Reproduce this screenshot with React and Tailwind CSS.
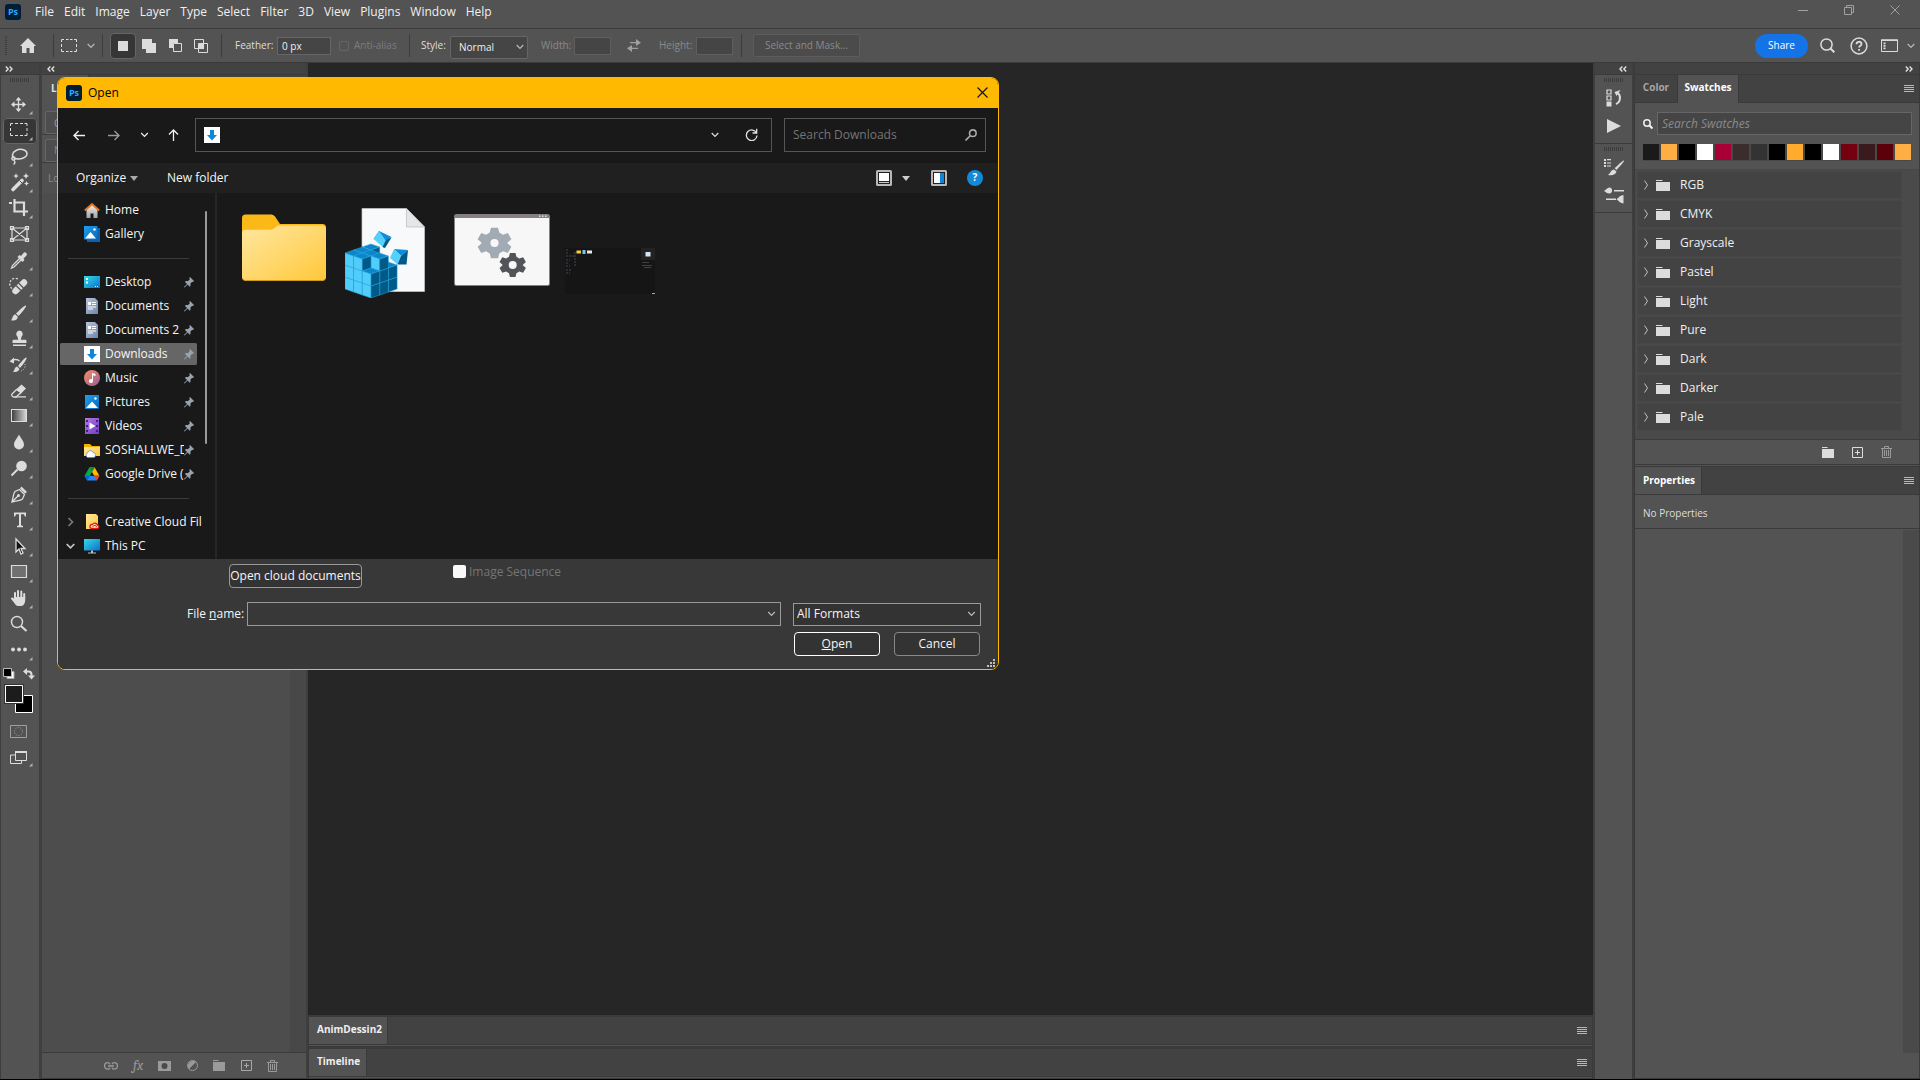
import React from "react";

const L = "#dcdcdc";

function Ps({ className }) {
  return (
    <svg viewBox="0 0 16 16" className={className} aria-label="Photoshop">
      <rect width="16" height="16" rx="3" fill="#001e36" />
      <text x="8" y="11" textAnchor="middle" fontSize="9" fontWeight="700" fill="#31a8ff" fontFamily="Open Sans, sans-serif">Ps</text>
    </svg>
  );
}

function Chevron({ className = "", w = 8, color = "#b8b8b8" }) {
  return (
    <svg width={w} height="6" viewBox="0 0 8 6" className={className} fill="none" stroke={color} strokeWidth="1.2" aria-hidden="true">
      <path d="M.7 1 4 4.5 7.3 1" />
    </svg>
  );
}

function Double({ left }) {
  return (
    <svg width="8" height="6" viewBox="0 0 8 6" fill="none" stroke="#e0e0e0" strokeWidth="1.4" aria-hidden="true">
      {left ? <path d="M3.4.5 1 3l2.400 2.500M7.200.5 4.800 3l2.400 2.500" /> : <path d="M.8.5 3.200 3 .8 5.500M4.600.5 7 3 4.600 5.500" />}
    </svg>
  );
}

function Grip() {
  return (
    <svg width="20" height="4" viewBox="0 0 20 4" className="shrink-0" aria-hidden="true">
      {[0, 2, 4, 6, 8, 10, 12, 14, 16, 18].map((x) => (
        <rect key={x} x={x} width="1" height="4" fill="#3d3d3d" />
      ))}
    </svg>
  );
}

function Burger() {
  return (
    <button aria-label="Panel menu" className="flex items-center">
      <svg width="10" height="8" viewBox="0 0 10 8" fill="#b8b8b8" aria-hidden="true">
        <path d="M0 0h10v1H0zM0 2h10v1H0zM0 4h10v1H0zM0 6h10v1H0z" />
      </svg>
    </button>
  );
}

function FolderGlyph({ w = 14, color = L }) {
  return (
    <svg width={w} height="11" viewBox="0 0 14 11" preserveAspectRatio="none" fill={color} className="shrink-0" aria-hidden="true">
      <path d="M0 0h6l1 1H0zM0 2h14v9H0z" />
    </svg>
  );
}

function PlusGlyph({ color = L }) {
  return (
    <svg width="11" height="11" viewBox="0 0 11 11" fill="none" stroke={color} aria-hidden="true">
      <path d="M.5.5h10v10H.5zM5.500 3v5M3 5.500h5" />
    </svg>
  );
}

function TrashGlyph() {
  return (
    <svg width="11" height="12" viewBox="0 0 11 12" fill="none" stroke="#9a9a9a" aria-hidden="true">
      <path d="M0 2.500h11M3.500 2V.5h4V2M1.500 3v8.500h8V3M3.500 4v6M5.500 4v6M7.500 4v6" />
    </svg>
  );
}

/* ---------- Menu bar and options bar ---------- */

const menus = ["File", "Edit", "Image", "Layer", "Type", "Select", "Filter", "3D", "View", "Plugins", "Window", "Help"];

function MenuBar() {
  return (
    <header className="flex h-7 shrink-0 items-center bg-[#535353] pr-[2px] pl-[5px]">
      <Ps className="mt-[-4px] h-4 w-4" />
      <nav className="ml-[9px] flex grow pb-[4px] text-xs text-[#f0f0f0]">
        {menus.map((m) => (
          <button key={m} className="px-[5px]">{m}</button>
        ))}
      </nav>
      <div className="flex h-full pb-[8px]">
        {[
          ["Minimize", "M0 5.500h10"],
          ["Restore", "M.5 2.500h7v7h-7zM2.500 2.500V.5h7v7h-2"],
          ["Close", "M.5.5l9 9M9.500.5l-9 9"],
        ].map(([n, d]) => (
          <button key={n} aria-label={n} className="flex w-[46px] items-center justify-center">
            <svg width="10" height="10" viewBox="0 0 10 10" fill="none" stroke="#a0a0a0" aria-hidden="true"><path d={d} /></svg>
          </button>
        ))}
      </div>
    </header>
  );
}

function Sep() {
  return <span className="h-[23px] w-px shrink-0 bg-[#3c3c3c]" />;
}

function OptionsBar() {
  return (
    <div className="flex h-[35px] shrink-0 items-center border-y border-[#3a3a3a] bg-[#535353] pr-[5px] pl-[5px] text-[10px] text-[#dedede]">
      <svg width="2" height="20" viewBox="0 0 2 20" aria-hidden="true">
        {[0, 2, 4, 6, 8, 10, 12, 14, 16, 18].map((y) => <rect key={y} y={y} width="2" height="1" fill="#3d3d3d" />)}
      </svg>
      <button aria-label="Home" className="mr-[17px] ml-[13px]">
        <svg width="16" height="15" viewBox="0 0 16 15" fill={L} aria-hidden="true"><path d="M8 0l8 8h-2v7H9.500v-5h-3v5H2V8H0z" /></svg>
      </button>
      <Sep />
      <button aria-label="Marquee preset" className="mx-[7px] flex items-center gap-[10px]">
        <svg width="16" height="13" viewBox="0 0 16 13" fill="none" stroke={L} aria-hidden="true"><path d="M.5 3V.5H3M5 .5h2.500M9 .5h2.500M13 .5h2.500V3M15.500 5v3M15.500 10v2.500H13M11.500 12.500H9M7.500 12.500H5M3 12.500H.5V10M.5 8V5" /></svg>
        <Chevron />
      </button>
      <Sep />
      <div className="flex items-center pr-[13px] pl-[7px]">
        <button aria-label="New selection" className="flex h-[26px] w-[26px] items-center justify-center rounded-sm border border-[#666] bg-[#363636]">
          <span className="h-[10px] w-[10px] bg-[#dcdcdc]" />
        </button>
        <button aria-label="Add to selection" className="ml-[6px]">
          <svg width="14" height="14" viewBox="0 0 14 14" fill={L} aria-hidden="true"><path d="M0 0h10v4h4v10H4v-4H0z" /></svg>
        </button>
        <button aria-label="Subtract from selection" className="ml-[13px]">
          <svg width="13" height="13" viewBox="0 0 13 13" aria-hidden="true"><path d="M0 0h9v4H4v5H0z" fill={L} /><path d="M4.500 4.500h8v8h-8z" fill="none" stroke={L} /></svg>
        </button>
        <button aria-label="Intersect with selection" className="ml-[12px]">
          <svg width="14" height="14" viewBox="0 0 14 14" aria-hidden="true"><path d="M.5.5h9v9h-9zM4.500 4.500h9v9h-9z" fill="none" stroke={L} /><path d="M5 5h5v5H5z" fill={L} /></svg>
        </button>
      </div>
      <Sep />
      <label className="ml-[13px] flex w-[96px] items-center justify-between">
        Feather:
        <input defaultValue="0 px" className="h-[18px] w-[54px] border border-[#666] bg-[#454545] px-1 text-[10px] text-[#f0f0f0]" />
      </label>
      <label className="ml-[8px] flex w-[70px] items-center gap-[5px] text-[#7d7d7d]">
        <input type="checkbox" disabled className="h-[10px] w-[10px] shrink-0 appearance-none rounded-xs border border-[#666]" />
        <span className="whitespace-nowrap">Anti-alias</span>
      </label>
      <Sep />
      <label className="ml-[11px] flex w-[107px] items-center justify-between">
        Style:
        <span className="relative mt-[3px] flex items-center">
          <select className="h-[23px] w-[78px] appearance-none rounded-xs border border-[#666] bg-[#454545] px-2 text-[10px] text-[#f0f0f0]">
            <option>Normal</option>
          </select>
          <Chevron className="absolute right-[4px]" w={8} />
        </span>
      </label>
      <label className="ml-[13px] flex w-[70px] items-center justify-between text-[#8a8a8a]">
        Width:
        <input disabled className="h-[18px] w-[37px] border border-[#5f5f5f] bg-[#454545]" />
      </label>
      <button aria-label="Swap width and height" className="mx-[16px]">
        <svg width="14" height="13" viewBox="0 0 14 13" fill="#a0a0a0" aria-hidden="true"><path d="M3 3h6V0l5 3.700L9 7V4.200H3zM11 10H5v3L0 9.300 5 6v2.800h6z" /></svg>
      </button>
      <label className="ml-[2px] flex w-[74px] items-center justify-between text-[#8a8a8a]">
        Height:
        <input disabled className="h-[18px] w-[37px] border border-[#5f5f5f] bg-[#454545]" />
      </label>
      <span className="ml-[8px] flex"><Sep /></span>
      <button disabled className="ml-[11px] h-[23px] w-[107px] rounded-xs border border-[#5c5c5c] bg-[#4b4b4b] text-[#8a8a8a]">Select and Mask...</button>
      <div className="ml-auto flex items-center">
        <button className="h-[24px] w-[53px] rounded-full bg-[#1473e6] text-[10px] text-white">Share</button>
        <button aria-label="Search" className="ml-[12px]">
          <svg width="15" height="15" viewBox="0 0 15 15" fill="none" stroke={L} strokeWidth="1.500" aria-hidden="true"><circle cx="6.500" cy="6.500" r="5.600" /><path d="M10.500 10.500 14.300 14.300" strokeWidth="2" /></svg>
        </button>
        <button aria-label="Help" className="ml-[15px]">
          <svg width="18" height="18" viewBox="0 0 18 18" fill="none" stroke={L} strokeWidth="1.500" aria-hidden="true"><circle cx="9" cy="9" r="7.900" /><path d="M6.500 7.200c0-3.200 5-3.200 5-.2 0 1.700-2.400 1.800-2.400 3.600M9.100 12v1.700" strokeWidth="1.800" /></svg>
        </button>
        <button aria-label="Workspace" className="ml-[13px] flex items-center gap-[9px]">
          <svg width="17" height="13" viewBox="0 0 17 13" fill="none" stroke={L} aria-hidden="true"><path d="M.5 1h16v11.500H.5z" /><path d="M0 1.200h17" strokeWidth="1.500" /><path d="M2.500 3.500h2v1.700h-2zM2.500 6h2v1.700h-2zM2.500 8.500h2v1.700h-2z" fill={L} stroke="none" /></svg>
          <Chevron />
        </button>
      </div>
    </div>
  );
}

/* ---------- Toolbar ---------- */

const S = { fill: "none", stroke: L };

const tools = [
  ["Move", <><path {...S} strokeWidth="1.300" d="M14.500 6v13M8 12.500h13" /><path fill={L} d="M14.500 5l3 3.500h-6zM14.500 20l3-3.500h-6zM7 12.500l3.500-3v6zM22 12.500l-3.500-3v6z" /></>],
  ["Rectangular Marquee", <path {...S} d="M6.500 8V5.500H9M11 5.500h3M16 5.500h3M20.500 5.500h2.500V8M23 10v3M23 15v2.500h-2.500M19 17.500h-3M14 17.500h-3M9 17.500H6.500V15M6.500 13v-3" />],
  ["Lasso", <path {...S} strokeWidth="1.500" d="M11 14.500c-4-2-3-6 1-8 5-2.500 11-.5 11 3 0 4-6 6.500-11.500 5M11 14a1.600 1.600 0 1 0-2 2c1.500.5 2.500-1 2-2M10 16.500c1.500 1 1 3-.5 4" />],
  ["Magic Wand", <><path {...S} strokeWidth="3.600" strokeLinecap="round" d="M9 19.500l9-9" /><path stroke="#535353" d="M15.500 10.500l3 3" /><path fill={L} d="M12 3l.8 2.200L15 6l-2.200.8L12 9l-.8-2.200L9 6l2.200-.8zM22 3l.9 2.100L25 6l-2.100.9L22 9l-.9-2.100L19 6l2.100-.9zM22.500 11l.8 1.700 1.700.8-1.700.8-.8 1.700-.8-1.700-1.700-.8 1.700-.8z" /></>],
  ["Crop", <path {...S} strokeWidth="2.200" d="M5 7h3M10.500 3v12.500H24M10.500 6.500H20V20" />],
  ["Frame", <path {...S} strokeWidth="1.200" d="M8 6h15v12H8zM8 6l15 12M23 6L8 18M6.500 4.500h3v3h-3zM21.500 4.500h3v3h-3zM6.500 16.500h3v3h-3zM21.500 16.500h3v3h-3z" />],
  ["Eyedropper", <><path {...S} strokeWidth="1.300" d="M16.500 9.500l-8 8L7.500 20l2.500-1 8-8" /><path fill={L} d="M13.500 9l2-2 1.500 1 2.500-3c2-2 4.500 1 2.800 2.800L19.500 10.500l1 1.500-2 2z" /></>],
  ["Spot Healing", <><path {...S} strokeWidth="6.400" strokeLinecap="round" d="M11.500 17l8.500-8.500" /><path stroke="#535353" strokeWidth="1.200" d="M12 11.500l5.500 5.500M14.500 9l5.500 5.500" /><path {...S} strokeWidth="1.300" strokeDasharray="2 1.500" d="M8 14.500a5.500 5.500 0 1 1 7-9" /></>],
  ["Brush", <><path fill={L} d="M22 5.500c1 1-5 8-7.500 10.500L12 13.500C15 10.500 21 4.500 22 5.500z" /><path fill={L} d="M11.200 14.200l2.600 2.600c0 3-3 4.200-6.800 3.400 2-1.500 1-5 4.200-6z" /></>],
  ["Clone Stamp", <path fill={L} d="M15.500 4.500a3.500 3.500 0 0 1 2 6.200l-.7 3h4.200c1 0 1.500.5 1.500 1.300V17h-14v-2c0-.8.500-1.300 1.500-1.300h4.200l-.7-3a3.500 3.500 0 0 1 2-6.200zM9 18.500h13v1.500H9z" />],
  ["History Brush", <><path fill={L} d="M22.500 5.500c1 1-4 8-6.500 10.500L14 14C16 11 21.500 4.500 22.500 5.500zM13 14.500l2.300 2.300c0 2.500-2.800 3.700-6.300 3 2-1.500 1.200-4.500 4-5.300z" /><path {...S} strokeWidth="1.300" d="M7.500 9c2-2 6-2 8 0" /><path fill={L} d="M5.500 9.500l4.500-4v6z" /><path {...S} strokeDasharray="1 1.500" d="M21 12a6 6 0 0 1-4 7" /></>],
  ["Eraser", <><path {...S} strokeWidth="1.300" d="M12.500 11.500l-4.500 4.500c-.8 1 0 2.500 1.500 3h2.500l5-4.500z" /><path fill={L} d="M12 11.500l5.500-5 4.500 4-5 5zM11 18.300h11v1.200H11z" /></>],
  ["Gradient", <><defs><linearGradient id="tg"><stop stopColor="#3c3c3c" /><stop offset="1" stopColor="#d8d8d8" /></linearGradient></defs><rect x="7.500" y="5.500" width="15" height="12" fill="url(#tg)" stroke={L} /></>],
  ["Blur", <path fill={L} d="M15 4.500c1.500 3.500 5 6.500 5 10a5 5 0 0 1-10 0c0-3.500 3.500-6.500 5-10z" />],
  ["Dodge", <><circle cx="17.500" cy="10" r="5.300" fill={L} /><path {...S} strokeWidth="2" d="M13.500 13.500L7.500 19.500" /></>],
  ["Pen", <><path {...S} strokeWidth="1.300" d="M8 20c1-4 1.500-9 3-10.500l4.500-2 5 5-2 4.500C17 18.500 12 19 8 20zM8 20l6-6" /><circle cx="14.500" cy="13.500" r="1.500" fill={L} /><path fill={L} d="M16 6.500l1.500-2 5.500 5.500-2 1.500z" /></>],
  ["Horizontal Type", <path fill={L} d="M10 4.500h12v4h-1.200l-.8-2.200h-3v11l2 .7v1.300h-6V18l2-.7v-11h-3L11.200 8.500H10z" />],
  ["Path Selection", <path fill="#111" stroke={L} strokeWidth="1.300" d="M12 5v13l3-3 2 5 2-1-2-4.500h4z" />],
  ["Rectangle", <path fill="#707070" stroke={L} strokeWidth="1.200" d="M7.500 5.500h15v12h-15z" />],
  ["Hand", <><path {...S} strokeWidth="2" strokeLinecap="round" d="M11 12V7M14 11V5M17.300 11V5.500M20.200 12V8M8 12.500l3 3.500" /><path fill={L} d="M10 11h11.200v3c0 3-1.700 6-4 6h-3c-2 0-3-1.500-4-3.500L9 14z" /></>],
  ["Zoom", <><circle cx="13" cy="10" r="5.500" {...S} strokeWidth="1.400" /><path {...S} strokeWidth="2.200" d="M17 14l5.500 5" /></>],
  ["Edit Toolbar", <g fill={L}><circle cx="9" cy="11.500" r="1.900" /><circle cx="15" cy="11.500" r="1.900" /><circle cx="21" cy="11.500" r="1.900" /></g>],
];

const Corner = () => <path fill="#b0b0b0" d="M28.500 19v3.500H25z" />;

function Toolbar() {
  return (
    <aside className="flex w-[42px] shrink-0 flex-col border-r-3 border-l border-[#3f3f3f] bg-[#535353]">
      <button aria-label="Expand toolbar" className="flex h-[12px] items-center border-b border-[#3a3a3a] bg-[#424242] pl-[4px]"><Double /></button>
      <div className="flex h-[17px] items-start pt-[3px] pl-[9px]"><Grip /></div>
      {tools.map(([name, art], i) => (
        <button key={name} aria-label={name} className={i === 1 ? "mx-[2px] h-[26px] rounded-sm bg-[#363636] pl-px outline outline-[#666] -outline-offset-1" : "mx-[2px] h-[26px] pl-px"}>
          <svg width="32" height="26" viewBox="0 0 32 26" className="block" aria-hidden="true">
            {art}
            {name !== "Frame" && name !== "Zoom" && <Corner />}
          </svg>
        </button>
      ))}
      <svg width="38" height="55" viewBox="0 0 38 55" className="shrink-0" role="img" aria-label="Foreground and background colors">
        <path d="M6 7.500h7v7H6z" fill="#fff" stroke="#aaa" />
        <path d="M2.500 4.500h8v8h-8z" fill="#000" stroke="#bbb" />
        <path d="M24.500 7.500h3c2 0 3 1 3 3v2" fill="none" stroke={L} strokeWidth="2" />
        <path d="M22 7.500l4-3.500v7zM27 11.500h7l-3.500 4z" fill={L} />
        <path d="M14.500 31.500h17v17h-17z" fill="#000" stroke="#fff" />
        <path d="M3.500 20.500h19v19h-19z" fill="#535353" stroke="#333" />
        <path d="M4.500 21.500h17v17h-17z" fill="#1c1c1c" stroke="#fff" />
      </svg>
      <button aria-label="Quick Mask" className="h-[26px] pl-[9px]">
        <svg width="17" height="14" viewBox="0 0 17 14" fill="none" stroke="#a0a0a0" aria-hidden="true"><path d="M.5.5h16v12H.5z" /><circle cx="8.500" cy="6.500" r="4" strokeDasharray="1 1.500" /></svg>
      </button>
      <button aria-label="Screen mode" className="h-[26px] pl-[9px]">
        <svg width="24" height="17" viewBox="0 0 24 17" fill="none" stroke={L} aria-hidden="true"><path d="M.5 5h11v8.500H.5z" /><path fill="#535353" d="M5.500 2h11v8.500h-11z" /><path d="M5 2h12" strokeWidth="2" /><path d="M22.500 13v3.500H19z" fill="#b0b0b0" stroke="none" /></svg>
      </button>
    </aside>
  );
}

function LayersPanel() {
  return (
    <section className="flex w-[266px] shrink-0 flex-col border-r-2 border-[#3e3e3e] bg-[#4d4d4d] text-[10px] text-[#e0e0e0]">
      <button aria-label="Collapse panel" className="flex h-[12px] shrink-0 items-center border-b border-[#3a3a3a] bg-[#424242] pl-[5px]"><Double left /></button>
      <div className="flex h-[28px] shrink-0 bg-[#424242]">
        <h2 aria-label="Layers" className="flex w-[47px] items-center border-r border-[#3a3a3a] bg-[#535353] pb-[2px] pl-[9px] font-bold">L</h2>
      </div>
      <div className="flex h-[32px] shrink-0 items-end border-b border-[#3e3e3e] bg-[#535353] px-[3px]">
        <input aria-label="Filter layers" placeholder="Q" className="h-[23px] w-24 rounded-xs border border-[#666] bg-[#4d4d4d] px-2 placeholder:text-[#999]" />
      </div>
      <div className="flex h-[28px] shrink-0 items-end border-b border-[#3e3e3e] bg-[#535353] px-[3px]">
        <select disabled aria-label="Blend mode" className="h-[23px] w-24 appearance-none rounded-xs border border-[#666] bg-[#4d4d4d] px-2 text-[#888]"><option>N</option></select>
      </div>
      <div className="flex h-[30px] shrink-0 items-center bg-[#505050] pl-[6px] text-[#8a8a8a]">Lo</div>
      <div className="flex grow justify-end"><div className="w-[16px] bg-[#484848]" /></div>
      <footer className="flex h-[27px] shrink-0 items-center border-y border-[#3a3a3a] bg-[#535353] pl-[62px]">
        <button aria-label="Link layers" className="w-[29px]">
          <svg width="14" height="8" viewBox="0 0 14 8" fill="none" stroke="#9a9a9a" strokeWidth="1.300" aria-hidden="true"><path d="M6 2.300C5.500 1 4.700.7 3.800.7a3.200 3.200 0 0 0 0 6.500C4.700 7.200 5.500 7 6 5.700M8 2.300C8.500 1 9.300.7 10.200.7a3.200 3.200 0 0 1 0 6.500C9.300 7.200 8.500 7 8 5.700M4 4h6" /></svg>
        </button>
        <button aria-label="Layer style" className="w-[25px] text-left font-serif text-sm text-[#9a9a9a] italic">fx</button>
        <button aria-label="Layer mask" className="w-[29px]">
          <svg width="13" height="10" viewBox="0 0 13 10" aria-hidden="true"><path d="M0 0h13v10H0z" fill="#9a9a9a" /><circle cx="6.500" cy="5" r="3" fill="#4a4a4a" /></svg>
        </button>
        <button aria-label="Adjustment layer" className="w-[26px]">
          <svg width="12" height="12" viewBox="0 0 12 12" aria-hidden="true"><circle cx="5.500" cy="5.500" r="5" fill="none" stroke="#9a9a9a" /><path d="M2 9A5 5 0 0 1 9 2z" fill="#9a9a9a" /></svg>
        </button>
        <button aria-label="New group" className="w-[28px]"><FolderGlyph w={12} color="#9a9a9a" /></button>
        <button aria-label="New layer" className="w-[26px]"><PlusGlyph color="#a8a8a8" /></button>
        <button aria-label="Delete layer"><TrashGlyph /></button>
      </footer>
    </section>
  );
}

/* ---------- Canvas area ---------- */

function BottomPanel({ title, className }) {
  return (
    <section className="flex h-[32px] shrink-0 flex-col border-x border-t-2 border-b border-[#3a3a3a] bg-[#535353]">
      <div className="flex h-[28px] items-center justify-between border-b border-[#3a3a3a] bg-[#424242] pr-[5px] text-[10px] font-bold text-[#eee]">
        <h2 className={className}>{title}</h2>
        <Burger />
      </div>
    </section>
  );
}

function CanvasArea() {
  return (
    <main className="flex min-w-0 grow flex-col bg-[#262626]">
      <div className="grow" />
      <BottomPanel title="AnimDessin2" className="flex h-full w-[79px] items-center border-r border-[#3a3a3a] bg-[#535353] pb-[2px] pl-[8px]" />
      <BottomPanel title="Timeline" className="flex h-full w-[58px] items-center border-r border-[#3a3a3a] bg-[#535353] pb-[2px] pl-[8px]" />
    </main>
  );
}

/* ---------- Right side ---------- */

function IconDock() {
  return (
    <aside className="flex w-[41px] shrink-0 flex-col border-x-2 border-[#3e3e3e] bg-[#535353]">
      <button aria-label="Expand dock" className="flex h-[12px] items-center justify-end border-b border-[#3a3a3a] bg-[#424242] pr-[5px]"><Double left /></button>
      <div className="flex h-[69px] flex-col items-center border-b border-[#3a3a3a] pt-[3px]">
        <Grip />
        <button aria-label="History" className="mt-[7px] block">
          <svg width="16" height="18" viewBox="0 0 16 18" className="block" fill="none" stroke={L} strokeWidth="1.200" aria-hidden="true"><path d="M1 1h4v4H1zM1 7h4v4H1z" /><path d="M.5 12.500h5v5h-5z" fill={L} stroke="none" /><path d="M10 15c5-2 5-9 1.500-11" strokeWidth="2" /><path d="M8.500 3l6-2-4 6z" fill={L} stroke="none" /></svg>
        </button>
        <button aria-label="Actions" className="mt-[12px]">
          <svg width="14" height="14" viewBox="0 0 14 14" className="block" fill={L} aria-hidden="true"><path d="M0 0l14 7-14 7z" /></svg>
        </button>
      </div>
      <div className="flex h-[69px] flex-col items-center border-b border-[#3a3a3a] pt-[3px]">
        <Grip />
        <button aria-label="Brushes" className="mt-[7px]">
          <svg width="20" height="18" viewBox="0 0 20 18" className="block" fill={L} aria-hidden="true"><path d="M0 1h2v2H0zM3 1h4v1.200H3zM0 4h2v2H0zM3 4.500h4v1H3zM0 7h2v2H0zM3 7.500h4v1H3zM20 2.500c.8.8-5 7-7.500 9.500l-1.800-1.800C13 8 19.200 1.700 20 2.500zM10 11.500l2.500 2c-.5 3-4 4.200-8.500 3.500 2.500-1.500 3-5.500 6-5.500z" /></svg>
        </button>
        <button aria-label="Brush settings" className="mt-[11px]">
          <svg width="20" height="17" viewBox="0 0 20 17" className="block" fill={L} aria-hidden="true"><path d="M0 4c2-1 3-3.500 5.500-3.500C9 .5 9 6.500 5.500 6.500 3 6.500 2 5 0 4zM10 3h10v1.600H10zM2 11.500h10V13H2zM12.500 12.300c2-1.500 4-4.300 7-4.300v8.500c-3 0-5-2.700-7-4.200z" /></svg>
        </button>
      </div>
    </aside>
  );
}

const swatches = ["#1a1a1a", "#ffae43", "#000", "#fff", "#a80036", "#3b2d2e", "#333", "#000", "#ffab2e", "#000", "#fff", "#75000f", "#3b1a1d", "#5b0009", "#ffae43"];
const groups = ["RGB", "CMYK", "Grayscale", "Pastel", "Light", "Pure", "Dark", "Darker", "Pale"];

function RightPanels() {
  return (
    <aside className="flex w-[286px] shrink-0 flex-col border-x border-[#3a3a3a] bg-[#535353] text-[10px] text-[#dedede]">
      <button aria-label="Collapse panels" className="flex h-[12px] shrink-0 items-center justify-end border-b border-[#3a3a3a] bg-[#424242] pr-[6px]"><Double /></button>
      <div className="flex h-[28px] shrink-0 items-center border-b border-[#3a3a3a] bg-[#424242] pr-[5px] font-bold">
        <button className="h-full w-[43px] border-r border-[#3a3a3a] pb-[2px] text-[#a5a5a5]">Color</button>
        <button className="h-[28px] w-[61px] border-r border-[#3a3a3a] bg-[#535353] pb-[2px] text-white">Swatches</button>
        <span className="ml-auto"><Burger /></span>
      </div>
      <label className="mt-[9px] flex shrink-0 items-center gap-[4px] pr-[7px] pl-[8px]">
        <svg width="10" height="10" viewBox="0 0 10 10" fill="none" stroke="#f0f0f0" strokeWidth="1.500" aria-label="Search"><circle cx="4" cy="4" r="3.200" /><path d="M6.500 6.500l3 3" strokeWidth="2.200" /></svg>
        <input placeholder="Search Swatches" className="h-[23px] min-w-0 grow border border-[#666] bg-[#454545] px-1 text-xs italic placeholder:text-[#8a8a8a]" />
      </label>
      <div className="mx-[8px] mt-[9px] flex h-[17px] shrink-0 justify-between bg-[#484848]">
        {swatches.map((c, i) => (
          <button key={i} aria-label={"Swatch " + (i + 1)} className="h-[16px] w-[16px]" style={{ background: c }} />
        ))}
      </div>
      <div className="mt-[8px] flex h-[270px] shrink-0 flex-col gap-px border-t border-[#474747] bg-[#4a4a4a] pt-px pr-[17px] pl-[2px] text-xs text-[#f0f0f0]">
        {groups.map((g) => (
          <button key={g} className="flex h-[28px] shrink-0 items-center bg-[#434343] pl-[7px] outline outline-[#474747] -outline-offset-1">
            <svg width="4" height="10" viewBox="0 0 4 10" fill="none" stroke="#c0c0c0" className="mr-[8px]" aria-hidden="true"><path d="M.5.5l3 4.500-3 4.500" /></svg>
            <FolderGlyph />
            <span className="ml-[10px]">{g}</span>
          </button>
        ))}
      </div>
      <div className="flex h-[26px] shrink-0 items-center justify-end gap-[18px] border-y border-[#3a3a3a] pr-[27px]">
        <button aria-label="New group"><FolderGlyph w={12} /></button>
        <button aria-label="New swatch"><PlusGlyph /></button>
        <button aria-label="Delete swatch"><TrashGlyph /></button>
      </div>
      <div className="mt-px flex h-[29px] shrink-0 items-center border-t border-b border-[#3a3a3a] bg-[#424242] pr-[5px]">
        <h2 className="flex h-[27px] w-[67px] items-center border-r border-[#3a3a3a] bg-[#535353] pb-px pl-[8px] font-bold text-white">Properties</h2>
        <span className="ml-auto"><Burger /></span>
      </div>
      <p className="flex h-[34px] shrink-0 items-center border-b border-[#3a3a3a] pt-[4px] pl-[8px]">No Properties</p>
      <div className="mt-px mb-[25px] flex grow justify-end"><div className="w-[16px] bg-[#4a4a4a]" /></div>
      <div className="h-px bg-[#3a3a3a]" />
    </aside>
  );
}

/* ---------- Open dialog ---------- */

const Gradients = () => (
  <defs>
    <linearGradient id="bl" x2="1" y2="1"><stop stopColor="#1fa0ee" /><stop offset="1" stopColor="#0669bd" /></linearGradient>
    <linearGradient id="cy" x2="1" y2="1"><stop stopColor="#35dbe6" /><stop offset="1" stopColor="#0b70cc" /></linearGradient>
    <linearGradient id="ye" x2="1" y2="1"><stop stopColor="#ffe7a0" /><stop offset="1" stopColor="#ffc83a" /></linearGradient>
    <linearGradient id="mu" x2="1" y2="1"><stop stopColor="#f4906a" /><stop offset="1" stopColor="#9c5a92" /></linearGradient>
    <linearGradient id="vi" x2="1" y2="1"><stop stopColor="#b478e8" /><stop offset="1" stopColor="#6f3ec2" /></linearGradient>
    <linearGradient id="do" x2="1" y2="1"><stop stopColor="#b5c5da" /><stop offset="1" stopColor="#7084a8" /></linearGradient>
    <linearGradient id="ho" x2="0" y2="1"><stop stopColor="#f0f0f0" /><stop offset="1" stopColor="#a5a5a5" /></linearGradient>
  </defs>
);

const docIcon = (
  <><path d="M2 0h9l3 3v13H2z" fill="url(#do)" /><path d="M4 4h3v3H4zM8 4h4v1H8zM8 6h4v1H8zM4 8.500h8v1H4zM4 10.500h5v1H4z" fill="#fff" /></>
);

const places = [
  { name: "Home", art: <><path d="M2.500 7L8 2l5.500 5v9h-4v-4.500h-3V16h-4z" fill="url(#ho)" /><path d="M.8 8.500L8 2l7.200 6.500" fill="none" stroke="#e8761c" strokeWidth="2" /></> },
  { name: "Gallery", art: <><path d="M3 2h13v14H3z" fill="#0b62ad" /><path d="M0 0h13.500v13.500H0z" fill="url(#bl)" /><path d="M1 12.500L6.500 6l5.500 6.500z" fill="#fff" /><circle cx="10.500" cy="3.500" r="1.200" fill="#fff" /></> },
  null,
  { name: "Desktop", pin: true, art: <><path d="M0 2h16v12H0z" fill="url(#cy)" /><path d="M2 4h2v2H2zM2 7.500h2v2H2z" fill="#e8fbff" /><path d="M11 12h1v1h-1zM13 12h1v1h-1z" fill="#fff" /></> },
  { name: "Documents", pin: true, art: docIcon },
  { name: "Documents 2", pin: true, art: docIcon },
  { name: "Downloads", pin: true, active: true, art: <DownArt /> },
  { name: "Music", pin: true, art: <><circle cx="8" cy="8" r="8" fill="url(#mu)" /><path d="M8 3l3.500 1v2L9 5.300V11a2 2 0 1 1-1-1.700z" fill="#fff" /></> },
  { name: "Pictures", pin: true, art: <><path d="M1 1h14v14H1z" fill="url(#bl)" /><path d="M2 14l6-6.500 6 6.500z" fill="#fff" /><circle cx="11.500" cy="4.500" r="1.200" fill="#fff" /></> },
  { name: "Videos", pin: true, art: <><path d="M1 0h14v16H1z" fill="url(#vi)" /><path d="M2 2h2v2H2zM2 7h2v2H2zM2 12h2v2H2zM12 2h2v2h-2zM12 7h2v2h-2zM12 12h2v2h-2z" fill="#42207e" /><path d="M5.500 4.500l6 3.500-6 3.500z" fill="#fff" /></> },
  { name: "SOSHALLWE_D", pin: true, art: <><path d="M0 2h6l2 2h8v10H0z" fill="#f5b100" /><path d="M0 5h16v9H0z" fill="url(#ye)" /><path d="M3.500 15.500a2.500 2.500 0 0 1 0-4.500c.8-3 4.700-3 5.500-.5 3 0 3.500 5 .5 5z" fill="#fff" stroke="#3a8fd6" strokeWidth=".7" /></> },
  { name: "Google Drive (", pin: true, art: <><path d="M5.300 1.500L8 6.200 3.300 14.500.6 9.800z" fill="#00ac47" /><path d="M10.700 1.500l4.700 8.300H10L5.300 1.500z" fill="#ffba00" /><path d="M5.300 1.500h5.400L8 6.200z" fill="#188038" /><path d="M.6 9.800h14.800l-2.700 4.700H3.300z" fill="#2684fc" /><path d="M.6 9.800h5.400l-2.700 4.700z" fill="#0066da" /><path d="M10 9.800h5.400l-2.700 4.700z" fill="#ea4335" /><path d="M8 6.200l2 3.600H6z" fill="#191919" /></> },
  null,
  { name: "Creative Cloud Fil", arrow: "right", art: <><path d="M2 0h10l2 2v13H2z" fill="url(#ye)" /><path d="M6 12.500a2 2 0 0 1 2.500-2c1.500-2 4.500-1.500 5 .5 2 .5 2 3.500-.5 3.500H8a2 2 0 0 1-2-2z" fill="#fff0c0" stroke="#e01b0c" strokeWidth="1.300" /><path d="M8.500 12.500l3-1.500 1 2" stroke="#e01b0c" fill="none" /></> },
  { name: "This PC", arrow: "down", art: <><path d="M0 1h16v11.500H0z" fill="url(#cy)" /><path d="M7 12.500h2v2H7zM4 14.500h8v1H4z" fill="#b8c0c8" /></> },
];

function DownArt() {
  return <><path d="M0 0h16v16H0z" fill="#fff" /><path d="M6 3h4v5h3l-5 5.500L3 8h3z" fill="#1086d8" /></>;
}

function Sidebar() {
  return (
    <nav className="flex w-[159px] shrink-0 border-r-2 border-[#262626] bg-[#191919] pt-[5px]">
      <ul className="w-[140px] shrink-0">
        {places.map((p, i) =>
          p ? (
            <li key={p.name}>
              <button className={p.active ? "ml-[2px] flex h-[24px] w-[137px] items-center rounded-xs border-y border-[#191919] bg-[#666] pl-[3px]" : "ml-[2px] flex h-[24px] w-[137px] items-center pl-[3px]"}>
                <span className="flex w-[21px] shrink-0 pl-[3px]">
                  {p.arrow === "right" && <svg width="9" height="10" viewBox="0 0 9 10" fill="none" stroke="#7a7a7a" strokeWidth="1.700" aria-hidden="true"><path d="M2.500 1l4 4-4 4" /></svg>}
                  {p.arrow === "down" && <svg width="9" height="6" viewBox="0 0 9 6" fill="none" stroke="#c8c8c8" strokeWidth="1.700" aria-hidden="true"><path d="M.7 1l3.800 3.800L8.300 1" /></svg>}
                </span>
                <svg width="16" height="16" viewBox="0 0 16 16" className="shrink-0" aria-hidden="true">{p.art}</svg>
                <span className={p.pin ? "ml-[5px] min-w-0 grow overflow-hidden text-left whitespace-nowrap" : "ml-[5px] min-w-0 grow text-left whitespace-nowrap"}>{p.name}</span>
                {p.pin && (
                  <svg width="10" height="11" viewBox="0 0 10 11" className="mr-[3px] shrink-0" fill="#9aa4ae" aria-hidden="true"><path d="M6 0l4 4-1 1-.8-.3L6.300 6.700c.4 1.300.2 2.300-.6 3L3.600 7.500.6 10.500 0 10l3-3L.8 4.800c.8-.8 2-.9 3-.5l2-2L5.300 1z" /></svg>
                )}
              </button>
            </li>
          ) : (
            <li key={i} className="flex h-[24px] items-center pr-[9px] pl-[10px]"><span className="h-px grow bg-[#3a3a3a]" /></li>
          )
        )}
      </ul>
      <div className="mt-[13px] ml-[7px] h-[233px] w-[2px] rounded-full bg-[#9a9a9a]" />
    </nav>
  );
}

/* Stacked cubes, listed back to front; i steps back-left, j steps back-right, k steps up. */
const cubes = [];
for (let depth = 4; depth >= 0; depth--)
  for (let i = 0; i < 3; i++)
    for (let k = 0; k < 3; k++) {
      const j = depth - i;
      const missing = k === 2 && ((i === 0 && j !== 1) || (i === 1 && j === 2));
      if (j >= 0 && j < 3 && !missing) cubes.push([26 + (j - i) * 8.7, 84 - 12 * k - 3 * depth]);
    }

function Cube({ x, y }) {
  return (
    <g stroke="#2fa4dc" strokeWidth=".5">
      <path d={`M${x} ${y}l-8.700-3 8.700-3 8.700 3z`} fill="#0a86cc" />
      <path d={`M${x} ${y}v12l-8.700-3v-12z`} fill="#50cdfb" />
      <path d={`M${x} ${y}v12l8.700-3v-12z`} fill="#005a87" />
    </g>
  );
}

const gear = "M-2.800-12h5.600l.9 3.800 2.900 1.700 3.800-1.300 2.800 4.800-3 2.700v.6l3 2.700-2.800 4.800-3.800-1.300-2.900 1.700-.9 3.800h-5.600l-.9-3.800-2.900-1.700-3.800 1.300-2.800-4.800 3-2.700v-.6l-3-2.700 2.800-4.800 3.800 1.300 2.900-1.700z";

function Files() {
  return (
    <div className="flex grow items-start gap-[13px] pt-[9px] pl-[19px]">
      <button aria-label="Folder">
        <svg width="96" height="96" viewBox="0 0 96 96" className="block" aria-hidden="true">
          <path d="M6 16a3.500 3.500 0 0 1 3.500-3.500h25c2 0 3 .5 4.500 2L44 22h42.500a3.500 3.500 0 0 1 3.500 3.500V50H6z" fill="#fbb917" />
          <path d="M6 31a3.500 3.500 0 0 1 3.500-3.300H34c2 0 3-.4 4.500-1.700l3.300-2.500H86a4 4 0 0 1 4 4V75a3.700 3.700 0 0 1-3.700 3.700H9.700A3.700 3.700 0 0 1 6 75z" fill="url(#ye)" />
          <path d="M6.500 76.500c1 1.500 2 2 3.200 2h76.600c1.500 0 2.500-.8 3.200-2" fill="none" stroke="#d29a1c" />
        </svg>
      </button>
      <button aria-label="Registration entries">
        <svg width="96" height="96" viewBox="0 0 96 96" className="block" aria-hidden="true">
          <path d="M17 6.500h44.500L79.500 25v64.500H17z" fill="#f8f9fb" stroke="#c8c8c8" strokeWidth=".7" />
          <path d="M61.500 6.500V25h18z" fill="#e4e6e8" stroke="#b8bcc0" strokeWidth=".7" />
          {cubes.map(([x, y], n) => <Cube key={n} x={x} y={y} />)}
          <path d="M34 29l12.500 6-5.500 4-12.500-2z" fill="#0d8ddb" />
          <path d="M34 29l7 10-2 7-10.500-9z" fill="#55cffb" />
          <path d="M46.500 35.500L40 46l-2.500-1 3.500-7z" fill="#005a87" />
          <path d="M49 47l14 1-7 6z" fill="#0d8ddb" />
          <path d="M49 47l7 7-3.500 8.500L45 56z" fill="#55cffb" />
          <path d="M63 48l-1.500 14.500h-9L56 54z" fill="#005a87" />
        </svg>
      </button>
      <button aria-label="Batch file">
        <svg width="96" height="96" viewBox="0 0 96 96" className="block" aria-hidden="true">
          <rect y="12" width="96" height="72" rx="2.500" fill="#858080" />
          <path d="M1 16h94v65.500a1.500 1.500 0 0 1-1.500 1.500h-91A1.500 1.500 0 0 1 1 81.500z" fill="#f7f7f7" />
          <path d="M85 13.500h1.500V15H85zM88 13.500h1.500V15H88zM91 13.500h1.500V15H91z" fill="#ddd" />
          <g transform="translate(40.500 41) scale(1.280)"><path d={gear} fill="#a2abb3" /><circle r="3.200" fill="#f7f7f7" /></g>
          <g transform="translate(58.700 63)"><path d={gear} fill="#515459" /><circle r="4" fill="#f7f7f7" /></g>
        </svg>
      </button>
      <button aria-label="Screenshot">
        <svg width="96" height="96" viewBox="0 0 96 96" className="block" aria-hidden="true">
          <path d="M2 46h90v46H2z" fill="#151516" />
          <path d="M78 46h14v12H78z" fill="#222" />
          <path d="M82.500 50h5v4.500h-5z" fill="#cfe8f8" />
          <path d="M13.500 48.500h4.500v3h-4.500z" fill="#fdc84a" />
          <path d="M24 48.500h5v3h-5z" fill="#e8e8e8" />
          <path d="M19.500 48h3v4h-3z" fill="#79c5ee" />
          <path d="M3 48h3M3 51h2M3 54h9M3 58h4M3 61h3M3 64h4M3 68h5M3 71h4M12 50v14" stroke="#444850" strokeDasharray="2 1" />
          <path d="M79 60.500h7M79 63.500h10M81 65.500h7" stroke="#4c4c4c" strokeWidth=".8" />
          <path d="M89 91.500h3" stroke="#aaa" />
        </svg>
      </button>
    </div>
  );
}

function OpenDialog() {
  return (
    <div role="dialog" aria-label="Open" className="absolute top-[77px] left-[57px] flex w-[942px] flex-col overflow-hidden rounded-lg border border-[#ffb900] bg-[#191919] text-xs text-[#f5f5f5]">
      <div className="flex h-[30px] shrink-0 items-center bg-[#ffb900] pr-[10px] pb-px pl-[8px] text-black">
        <Ps className="h-4 w-4" />
        <h1 className="ml-[6px] grow">Open</h1>
        <button aria-label="Close">
          <svg width="11" height="11" viewBox="0 0 11 11" className="block" stroke="#111" strokeWidth="1.100" aria-hidden="true"><path d="M.5.5l10 10M10.500.5l-10 10" /></svg>
        </button>
      </div>
      <div className="flex h-[55px] shrink-0 items-center pr-[12px] pb-px pl-[15px]">
        <button aria-label="Back" className="w-[35px]">
          <svg width="12" height="11" viewBox="0 0 12 11" fill="none" stroke="#f0f0f0" strokeWidth="1.400" aria-hidden="true"><path d="M12 5.500H1M5.500 1L1 5.500 5.500 10" /></svg>
        </button>
        <button aria-label="Forward" className="w-[32px]">
          <svg width="12" height="11" viewBox="0 0 12 11" fill="none" stroke="#999" strokeWidth="1.400" aria-hidden="true"><path d="M0 5.500h11M6.500 1L11 5.500 6.500 10" /></svg>
        </button>
        <button aria-label="Recent locations" className="w-[28px]"><Chevron w={9} color="#f0f0f0" /></button>
        <button aria-label="Up" className="w-[27px]">
          <svg width="11" height="12" viewBox="0 0 11 12" fill="none" stroke="#f0f0f0" strokeWidth="1.300" aria-hidden="true"><path d="M5.500 12V1M1 5.500L5.500 1 10 5.500" /></svg>
        </button>
        <div className="flex h-[34px] grow items-center border border-[#555] pr-[13px] pb-px pl-[8px]">
          <svg width="16" height="16" viewBox="0 0 16 16" aria-label="Downloads"><DownArt /></svg>
          <button aria-label="Previous locations" className="mr-[26px] ml-auto"><Chevron w={8} color="#e0e0e0" /></button>
          <button aria-label="Refresh">
            <svg width="13" height="13" viewBox="0 0 13 13" fill="none" stroke="#e0e0e0" strokeWidth="1.300" aria-hidden="true"><path d="M11.500 5A5.300 5.300 0 1 0 12 7.500M11.700.8V5H7.500" /></svg>
          </button>
        </div>
        <label className="ml-[12px] flex h-[34px] w-[202px] items-center border border-[#555] px-[8px]">
          <input aria-label="Search Downloads" placeholder="Search Downloads" className="min-w-0 grow bg-transparent placeholder:text-[#757575]" />
          <svg width="12" height="12" viewBox="0 0 12 12" fill="none" stroke="#aaa" strokeWidth="1.600" aria-hidden="true"><circle cx="7.800" cy="4.200" r="3.300" /><path d="M5.300 6.700L.5 11.500" /></svg>
        </label>
      </div>
      <div className="flex h-[30px] shrink-0 items-center bg-[#202020] pr-[15px] pl-[18px]">
        <button className="flex w-[91px] items-center gap-[4px]">Organize<svg width="8" height="5" viewBox="0 0 8 5" aria-hidden="true"><path d="M0 0h8L4 5z" fill="#aaa" /></svg></button>
        <button>New folder</button>
        <div className="ml-auto flex items-center">
          <button aria-label="Change view" className="flex items-center gap-[10px]">
            <svg width="16" height="16" viewBox="0 0 16 16" aria-hidden="true"><rect width="16" height="16" rx="1.500" fill="#b8b8b8" /><path d="M2 2h12v12H2z" fill="#222" /><path d="M3 3h10v8H3z" fill="#fff" /><path d="M3 12h10v1H3z" fill="#ccc" /></svg>
            <svg width="8" height="5" viewBox="0 0 8 5" aria-hidden="true"><path d="M0 0h8L4 5z" fill="#ccc" /></svg>
          </button>
          <button aria-label="Preview pane" className="ml-[21px]">
            <svg width="16" height="16" viewBox="0 0 16 16" className="block" aria-hidden="true"><rect width="16" height="16" rx="1.500" fill="#b8b8b8" /><path d="M2 2h12v12H2z" fill="#222" /><path d="M3 3h6v10H3z" fill="#fff" /><path d="M9 3h4v10H9z" fill="#1086d8" /></svg>
          </button>
          <button aria-label="Help" className="ml-[20px] flex h-4 w-4 items-center justify-center rounded-full bg-[#1489d8] text-[10px] font-bold text-white">?</button>
        </div>
      </div>
      <div className="flex h-[366px] shrink-0 overflow-hidden">
        <Sidebar />
        <Files />
      </div>
      <div className="flex h-[110px] shrink-0 flex-col bg-[#383838] pt-[5px]">
        <div className="flex items-start pl-[171px]">
          <button className="h-[24px] w-[133px] rounded-sm border border-[#999] bg-[#333] whitespace-nowrap">Open cloud documents</button>
          <label className="ml-[91px] flex h-[15px] items-center gap-[3px] text-[#757575]">
            <input type="checkbox" disabled className="h-[13px] w-[13px] appearance-none rounded-xs bg-[#f8f8f8]" />
            Image Sequence
          </label>
        </div>
        <div className="mt-[14px] flex items-center pr-[17px] pl-[129px]">
          <label htmlFor="fname" className="w-[60px] whitespace-nowrap">File <u>n</u>ame:</label>
          <span className="relative flex grow items-center">
            <input id="fname" className="h-[24px] w-full border border-[#999] bg-[#383838] px-1" />
            <Chevron className="absolute right-[5px]" w={9} />
          </span>
          <span className="relative ml-[12px] flex items-center">
            <select aria-label="Formats" className="h-[23px] w-[188px] appearance-none border border-[#999] bg-[#333] px-[3px]"><option>All Formats</option></select>
            <Chevron className="absolute right-[5px]" w={9} />
          </span>
        </div>
        <div className="mt-[6px] flex justify-end gap-[14px] pr-[18px]">
          <button className="h-[24px] w-[86px] rounded-sm border border-white bg-[#333]"><u>O</u>pen</button>
          <button className="h-[24px] w-[86px] rounded-sm border border-[#888] bg-[#333]">Cancel</button>
        </div>
        <svg width="8" height="8" viewBox="0 0 8 8" className="mt-[3px] mr-[3px] ml-auto" fill="#c0c0c0" aria-hidden="true"><path d="M6 0h2v2H6zM3 3h2v2H3zM6 3h2v2H6zM0 6h2v2H0zM3 6h2v2H3zM6 6h2v2H6z" /></svg>
      </div>
    </div>
  );
}

export default function App() {
  return (
    <div className="relative flex h-screen w-full flex-col overflow-hidden border-b border-black bg-[#535353] font-['Open_Sans','Noto_Sans',sans-serif]">
      <svg width="0" height="0" className="absolute" aria-hidden="true"><Gradients /></svg>
      <MenuBar />
      <OptionsBar />
      <div className="flex min-h-0 grow">
        <Toolbar />
        <LayersPanel />
        <CanvasArea />
        <IconDock />
        <RightPanels />
      </div>
      <OpenDialog />
    </div>
  );
}
